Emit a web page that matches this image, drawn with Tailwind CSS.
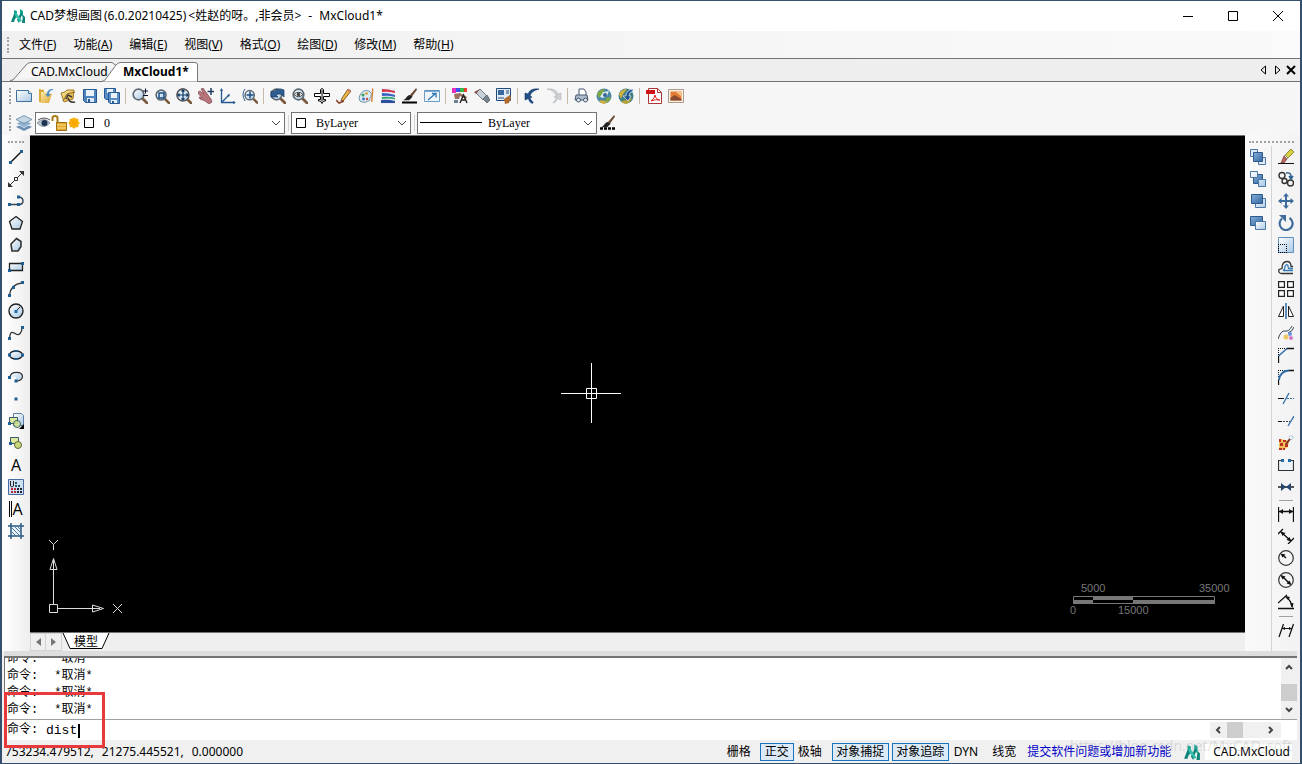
<!DOCTYPE html>
<html lang="zh-CN">
<head>
    <meta charset="UTF-8">
    <meta name="viewport" content="width=device-width, initial-scale=1.0">
    <title>CAD梦想画图 - MxCloud1</title>
    <script src="https://cdn.jsdelivr.net/npm/@tailwindcss/browser@4"></script>
</head>
<body class="h-screen overflow-hidden bg-[#f0f0f0] text-xs text-black font-['Noto_Sans','Noto_Sans_CJK_SC',sans-serif]">
<!-- shared gradients and symbols -->
<svg class="absolute size-0" aria-hidden="true">
    <defs>
        <linearGradient id="sky" x1="0" y1="0" x2="1" y2="1"><stop offset="0" stop-color="#fff"/><stop offset="1" stop-color="#a9c8e4"/></linearGradient>
        <linearGradient id="steel" x1="0" y1="0" x2="1" y2="1"><stop offset="0" stop-color="#86aedb"/><stop offset="1" stop-color="#34679f"/></linearGradient>
        <linearGradient id="gold" x1="0" y1="0" x2="1" y2="1"><stop offset="0" stop-color="#fbe9a4"/><stop offset="1" stop-color="#dca536"/></linearGradient>
    </defs>
    <symbol id="logo" viewBox="0 0 16 16">
        <path d="M4 2l3 1v6l-3 3zM10 1l3 2v6l-3-2z" fill="#12a594"/>
        <path d="M1 14l3-8 2 1-2 7zM7 12l4-8 1 2-3 9zM12 15l1-8 2 2v6z" fill="#0d8378"/>
        <path d="M6 4l6 9-2 1-5-7z" fill="#35c0ad"/>
    </symbol>
    <symbol id="lens" viewBox="0 0 16 16">
        <path d="M10 10l5 5" stroke="#7b5a3e" stroke-width="2.8" stroke-linecap="round"/>
        <circle cx="6.500" cy="6.500" r="5.300" fill="url(#sky)" stroke="#5c6872" stroke-width="1.700"/>
    </symbol>
    <symbol id="brush" viewBox="0 0 16 16">
        <path d="M15 0L8 8l2 2 6-8z" fill="#6b4a35"/>
        <path d="M8 8l3 2-4 4H0c4-1 4-6 8-6z" fill="#222"/>
    </symbol>
</svg>

<div class="flex h-full flex-col border-x-2 border-y border-[#35506c]">

    <!-- title bar -->
    <header class="flex h-[30px] shrink-0 items-center bg-white pl-2">
        <svg class="size-4"><use href="#logo"/></svg>
        <h1 class="ml-1 flex-1 whitespace-nowrap">CAD梦想画图<span class="mx-0.5">(6.0.20210425)</span>&lt;姓赵的呀。,非会员&gt;<span class="mx-1"> - </span>MxCloud1*</h1>
        <div class="flex [&>button]:grid [&>button]:h-7 [&>button]:w-[45px] [&>button]:place-items-center">
            <button aria-label="最小化"><svg width="12" height="12"><path d="M1 6.500h10" stroke="#000"/></svg></button>
            <button aria-label="最大化"><svg width="12" height="12"><path d="M1.500 1.500h9v9h-9z" fill="none" stroke="#000"/></svg></button>
            <button aria-label="关闭"><svg width="12" height="12"><path d="M1 1l10 10M11 1L1 11" stroke="#000"/></svg></button>
        </div>
    </header>

    <!-- menu -->
    <nav class="flex h-[27px] shrink-0 items-center gap-px bg-linear-to-r from-[#f0f0f0] to-[#fafafa] pl-[5px] [&>button]:px-2 [&>button]:whitespace-nowrap">
        <span class="h-4 border-l-2 border-dotted border-neutral-400"></span>
        <button class="ml-px">文件(<u>F</u>)</button>
        <button>功能(<u>A</u>)</button>
        <button>编辑(<u>E</u>)</button>
        <button>视图(<u>V</u>)</button>
        <button>格式(<u>O</u>)</button>
        <button>绘图(<u>D</u>)</button>
        <button>修改(<u>M</u>)</button>
        <button>帮助(<u>H</u>)</button>
    </nav>

    <!-- document tabs -->
    <div class="flex h-6 shrink-0 items-end border-y border-neutral-500 bg-[#eee] pl-2">
        <button class="relative h-[19px] w-[108px] pl-[21px] text-left">
            <svg class="absolute inset-0 overflow-visible" width="108" height="19"><path d="M0 18.500L3 18L16 3Q18 .5 21 .5H102L108 5" fill="#f6f6f6" stroke="#777"/></svg>
            <span class="relative">CAD.MxCloud</span>
        </button>
        <button class="relative -ml-4 h-[19px] w-24 pl-[21px] text-left font-bold">
            <svg class="absolute inset-0 overflow-visible" width="96" height="20"><path d="M0 19.500L3 18L14 3Q16 .5 19 .5H93Q95.500 .5 95.500 3V19.500" fill="#fff" stroke="#777"/></svg>
            <span class="relative">MxCloud1*</span>
        </button>
        <div class="ml-auto flex h-full items-center gap-1 pr-1">
            <button aria-label="上一个"><svg width="10" height="10"><path d="M7.500 1v8L3 5z" fill="none" stroke="#000"/></svg></button>
            <button aria-label="下一个"><svg width="10" height="10"><path d="M3.500 1v8L8 5z" fill="none" stroke="#000"/></svg></button>
            <button aria-label="关闭文档"><svg width="10" height="10"><path d="M1 1l8 8M9 1L1 9" stroke="#000" stroke-width="2"/></svg></button>
        </div>
    </div>

    <!-- standard toolbar -->
    <div class="flex h-7 shrink-0 items-center bg-[#f6f6f6] [&_svg]:size-4 [&>button]:grid [&>button]:size-[22px] [&>button]:shrink-0 [&>button]:place-items-center [&>i]:mx-0.5 [&>i]:h-4 [&>i]:w-0.5 [&>i]:border-l [&>i]:border-[#c8b8a8]">
        <span class="mr-0.5 ml-[7px] h-4 border-l-2 border-dotted border-neutral-400"></span>
        <button aria-label="新建"><svg viewBox="0 0 16 16"><path d="M.5 2.500h12l3 3v8h-15z" fill="url(#sky)" stroke="#40709c"/><path d="M12.500 2.500v3h3" fill="#fff" stroke="#40709c"/></svg></button>
        <button aria-label="打开"><svg viewBox="0 0 16 16"><path d="M1 1l5 1v13l-5-1z" fill="#d9a93a"/><path d="M3 4h4l7 2-3 9H3z" fill="url(#gold)"/><path d="M15 1c-4 0-6 2-6 5H7l3 3 3-3h-2c0-2 1-4 4-4z" fill="#4c8cc2"/></svg></button>
        <button aria-label="打开云图"><svg viewBox="0 0 16 16"><path d="M1 5l4-1 2-2h7l-1 9-9 3z" fill="url(#gold)" stroke="#a47b25"/><path d="M3 13l4-7 8-2" fill="none" stroke="#8a6419"/><path d="M15 14q-6 1-7-4M6 11l2-4 4 2" fill="none" stroke="#3d3a36" stroke-width="1.500"/></svg></button>
        <button aria-label="保存"><svg viewBox="0 0 16 16"><path d="M1.500 1.500h13v13h-11l-2-2z" fill="#4f83bd" stroke="#275a91"/><path d="M4 2h8v6H4z" fill="#e9f2fb"/><path d="M5 10h7v4H5z" fill="#dbe7f3"/><path d="M6 11h2v3H6z" fill="#275a91"/></svg></button>
        <button aria-label="另存为"><svg viewBox="0 0 16 16"><path d="M.5 .5h11v11H2l-1.500-1.500z" fill="#5b8ec5" stroke="#275a91"/><path d="M3 1h6v4H3z" fill="#e9f2fb"/><path d="M4.500 4.500h11v11H6l-1.500-1.500z" fill="#5b8ec5" stroke="#275a91"/><path d="M7 5h6v5H7zM7 12h6v3H7z" fill="#e9f2fb"/><path d="M8 13h2v2H8z" fill="#275a91"/></svg></button>
        <i></i>
        <button aria-label="实时缩放"><svg viewBox="0 0 16 16"><use href="#lens" width="16" height="16"/><path d="M11 3h5M13.500 .5v5M11 7.500h5" stroke="#113"/></svg></button>
        <button aria-label="窗口缩放"><svg viewBox="0 0 16 16"><use href="#lens" x="1" y="1" width="15" height="15"/><path d="M5 5h5v5H5z" fill="none" stroke="#1c4f86" stroke-width="1.500"/></svg></button>
        <button aria-label="范围缩放"><svg viewBox="0 0 16 16"><use href="#lens" width="16" height="16"/><circle cx="7" cy="7" r="6" fill="url(#sky)" stroke="#555" stroke-width="1.400"/><path d="M7 2v10M2 7h10M5.500 3.500L7 2l1.500 1.500M5.500 10.500L7 12l1.500-1.500M3.500 5.500L2 7l1.500 1.500M10.500 5.500L12 7l-1.500 1.500" fill="none" stroke="#123c66" stroke-width="1.200"/></svg></button>
        <button aria-label="平移"><svg viewBox="0 0 16 16"><path d="M0 4l2-1 4 3-3-5 2-1 5 7 3 4 1 3-3 2-4-3-5-2-1-2 3 1-4-5z" fill="#b7727a" stroke="#7d4a52" stroke-width=".7"/><path d="M13 0v7M9.500 3.500h7" stroke="#243a63" stroke-width="1.500"/></svg></button>
        <button aria-label="坐标系"><svg viewBox="0 0 16 16"><path d="M1.500 1v13.500H15M1.500 14.500L9 7" fill="none" stroke="#275a91" stroke-width="1.300"/><path d="M0 3l1.500-3L3 3zM13 13l3 1.500-3 1.500zM7 7l3-1-1 3z" fill="#275a91"/></svg></button>
        <button aria-label="放大"><svg viewBox="0 0 16 16"><use href="#lens" x="2" y="1" width="14" height="15"/><path d="M8 3.500v7M4.500 7h7" stroke="#1c4f86" stroke-width="1.500"/><path d="M3 1Q-1 6 3 13" fill="none" stroke="#275a91"/></svg></button>
        <i></i>
        <button aria-label="上一视图"><svg viewBox="0 0 16 16"><use href="#lens" width="16" height="16"/><path d="M1 9l0-6 2 1q5-5 11-2v7q-3-5-8-2l2 2z" fill="#2f5f92" stroke="#16375c" stroke-width=".7"/></svg></button>
        <button aria-label="动态观察"><svg viewBox="0 0 16 16"><use href="#lens" width="16" height="16"/><path d="M2 6.500Q6.500 2 11 6.500 6.500 11 2 6.500z" fill="#fff" stroke="#444"/><circle cx="6.500" cy="6.500" r="1.800" fill="#444"/></svg></button>
        <button aria-label="重生成"><svg viewBox="0 0 16 16"><path d="M6.500 1.500q1.500-2 3 0v4h6v3h-6v3h2v1.500h-2L8 15.500 6.500 13h-2v-1.500h2v-3h-6v-3h6z" fill="#fff" stroke="#000"/><path d="M8 2v11" stroke="#000"/></svg></button>
        <button aria-label="编辑"><svg viewBox="0 0 16 16"><path d="M12 1l3 2-7 9-3 1 1-3z" fill="#eab63c" stroke="#6b4a20" stroke-width=".8"/><path d="M12 1l3 2-1 1.500-3-2z" fill="#d67b6e"/><path d="M0 12l3 3 5-2" fill="none" stroke="#8b3c24" stroke-width="1.500"/></svg></button>
        <button aria-label="颜色"><svg viewBox="0 0 16 16"><path d="M2 7Q5 1 11 3q4 2 2 6-2 1-1 3-5 4-10 1-2-3 0-6z" fill="#d9eaf2" stroke="#7097a8"/><circle cx="5" cy="7" r="1.500" fill="#3c9b52"/><circle cx="8.500" cy="5.500" r="1.300" fill="#e0912c"/><circle cx="5.500" cy="11" r="1.400" fill="#4472c4"/><circle cx="9" cy="11" r="1.200" fill="#d04444"/><path d="M14 0l1.500 1-1 13h-1.500z" fill="#d68b42"/></svg></button>
        <button aria-label="图层颜色"><svg viewBox="0 0 16 16"><path d="M1 0h14v16H1z" fill="#e9eef4"/><path d="M2 1q6 0 13 2v2Q8 3 2 4z" fill="#d8334a"/><path d="M2 5q7 0 13 2v2Q8 7 2 8z" fill="#3a5fc2"/><path d="M2 9q7-1 13 1v1.500Q8 10 2 11z" fill="#2fa56a"/><path d="M1 12q7-1 14 1v2H1z" fill="#2c4f9e"/></svg></button>
        <button aria-label="线宽"><svg viewBox="0 0 16 16"><use href="#brush" width="16" height="14"/><path d="M0 14.500h15" stroke="#000" stroke-width="2"/></svg></button>
        <button aria-label="全屏"><svg viewBox="0 0 16 16"><path d="M.5 2.500h15v11H.5z" fill="#eef6fc" stroke="#6a9cc4"/><path d="M1 3h14" stroke="#5a91bf" stroke-width="1.500"/><path d="M4 12l7-6M8 5.500h4v4" fill="none" stroke="#3476b3" stroke-width="1.300"/></svg></button>
        <i></i>
        <button aria-label="文字样式"><svg viewBox="0 0 16 16"><path d="M0 0h4v5H0z" fill="#e22dc0"/><path d="M4 0h4v4H4z" fill="#3a54e6"/><path d="M8 0h4v4H8z" fill="#35b449"/><path d="M12 0h3v4h-3z" fill="#e9402f"/><path d="M2 6l6-1 7 4-1 2-6-3-1 3H3z" fill="#9a6f5f"/><path d="M2 12h4v3H2z" fill="#6a7f92"/><path d="M8 15l3.500-8 3.500 8M9.500 12h4" fill="none" stroke="#222" stroke-width="1.400"/></svg></button>
        <button aria-label="橡皮"><svg viewBox="0 0 16 16"><path d="M2 5l4-4 7 7-4 4z" fill="#c6d0d8" stroke="#5b666e" stroke-width=".8"/><path d="M9 11l4-4 3 5-3 3z" fill="#77838c" stroke="#4a545c" stroke-width=".7"/><path d="M0 4l6-3-4 5z" fill="#8a4a48"/></svg></button>
        <button aria-label="打印设置"><svg viewBox="0 0 16 16"><path d="M.5 .5h14v12H.5z" fill="#dfeaf5" stroke="#204a7a"/><path d="M2 2h6v5H2z" fill="#37689e"/><path d="M10 3h3M10 5h3M2 10h6" stroke="#204a7a"/><path d="M8 11l6-4 1 3-2 5-4 1z" fill="#b06c2c"/></svg></button>
        <i></i>
        <button aria-label="撤销"><svg viewBox="0 0 16 16"><path d="M15 1Q6 0 4 6L1 5l0 7 7-3-2-1q1-5 9-7z" fill="#234f86" stroke="#183a66" stroke-width=".6"/><path d="M5 6q-1 6 4 9" fill="none" stroke="#234f86" stroke-width="2.400"/></svg></button>
        <button aria-label="重做"><svg viewBox="0 0 16 16"><path d="M1 1q9-1 11 5l3-1v7L8 9l2-1Q9 3 1 1z" fill="#cfd2d5" stroke="#b4b8bc" stroke-width=".6"/><path d="M11 6q1 6-4 9" fill="none" stroke="#c4c8cc" stroke-width="2"/></svg></button>
        <i></i>
        <button aria-label="打印"><svg viewBox="0 0 16 16"><path d="M5 1h5l2 3v4H5z" fill="#fff" stroke="#48586e"/><path d="M2 7h11l1 5H1z" fill="#aebdd0" stroke="#48586e"/><circle cx="4.500" cy="12" r="2" fill="#dfe6ee" stroke="#48586e"/><circle cx="11.500" cy="12" r="2" fill="#dfe6ee" stroke="#48586e"/></svg></button>
        <button aria-label="网页浏览"><svg viewBox="0 0 16 16"><circle cx="8" cy="8" r="7.500" fill="#4b88a8"/><path d="M1 6q3-5 8-5l-3 5-3 4zM9 15q5-1 6-6l-5 1z" fill="#7fa83e"/><path d="M3 13q4-2 8 1l-3 2q-3 0-5-3z" fill="#cfae3c"/><path d="M4 9l3-5 6-1-2 5-4 2z" fill="#dce9ee"/><circle cx="9" cy="7" r="2" fill="#386892"/></svg></button>
        <button aria-label="发布网页"><svg viewBox="0 0 16 16"><circle cx="8" cy="8" r="7.500" fill="#3f7f86"/><path d="M1 6q3-5 8-5l-4 5-2 5z" fill="#d2b23d"/><path d="M3 13q6 0 11-3-2 5-6 6-3 0-5-3z" fill="#b9a233"/><path d="M15 1q-7 1-7 7H5l5 5 3-5h-2q0-4 4-5z" fill="#1d5293" stroke="#e8eef4" stroke-width=".7"/></svg></button>
        <i></i>
        <button aria-label="输出PDF"><svg viewBox="0 0 16 16"><path d="M2.500 .5h9l4 4v11h-13z" fill="#fff" stroke="#a33"/><path d="M11.500 .5v4h4" fill="none" stroke="#a33"/><path d="M0 2h9v4H0z" fill="#cf1515"/><path d="M5 13q4-3 4-6 1 5 5 5-5-1-9 1z" fill="none" stroke="#d22"/></svg></button>
        <button aria-label="输出图片"><svg viewBox="0 0 16 16"><path d="M.5 1.500h15v13H.5z" fill="#f8f1e8" stroke="#b09a88"/><path d="M2.500 3.500h11v9h-11z" fill="#e57c35"/><path d="M2.500 10l4-3 7 4v1.500h-11z" fill="#8a4a30"/><path d="M8 4h5v4z" fill="#f7c988"/></svg></button>
    </div>

    <!-- layer / colour / linetype bar -->
    <div class="flex h-[25px] shrink-0 items-center bg-[#f6f6f6] font-['Liberation_Serif','Noto_Sans_CJK_SC',serif]">
        <span class="mr-0.5 ml-[7px] h-4 border-l-2 border-dotted border-neutral-400"></span>
        <button aria-label="图层" class="grid size-[22px] place-items-center"><svg class="size-4" viewBox="0 0 16 16"><path d="M0 12l8-4 8 4-8 4z" fill="#6b90b4"/><path d="M0 8.500l8-4 8 4-8 4z" fill="#8fb0cd" stroke="#f6f6f6" stroke-width=".7"/><path d="M0 4.500l8-4 8 4-8 4z" fill="#c5d6e5" stroke="#56789a" stroke-width=".7"/></svg></button>
        <div class="relative">
            <select aria-label="当前图层" class="h-[22px] w-[250px] appearance-none border border-neutral-500 bg-white pl-[68px]"><option>0</option></select>
            <svg class="pointer-events-none absolute top-[3px] left-0.5" width="60" height="16">
                <path d="M0 8q7-7 13 0-6 7-13 0z" fill="#b9c6d2" stroke="#8793a0"/><circle cx="7.500" cy="8" r="3" fill="#1d3550"/><path d="M1 5q6-4 12 0" fill="none" stroke="#555"/>
                <path d="M15.500 6V3q0-2 2.500-2t2.500 2v5" fill="none" stroke="#a87a14" stroke-width="2"/><path d="M19.500 7.500h10v8h-10z" fill="#e2ab30" stroke="#9c6e10"/><path d="M20 10h9M20 13h9" stroke="#f8dc8c"/>
                <circle cx="37" cy="8" r="5" fill="#fdb813"/><path d="M37 2.500v11M31.500 8h11M33 4l8 8M41 4l-8 8" stroke="#f6a800" stroke-width="1.500"/>
                <path d="M47.500 3.500h9v9h-9z" fill="#fff" stroke="#000"/>
            </svg>
            <svg class="pointer-events-none absolute top-2 right-1" width="10" height="7"><path d="M1 1l4 4 4-4" fill="none" stroke="#444"/></svg>
        </div>
        <span class="mx-[3px] -mr-0.5 h-4 border-l border-neutral-300 pr-1"></span>
        <div class="relative">
            <select aria-label="颜色控制" class="h-[22px] w-[120px] appearance-none border border-neutral-500 bg-white pl-6"><option>ByLayer</option></select>
            <svg class="pointer-events-none absolute top-1.5 left-[5px]" width="10" height="10"><path d="M.5 .5h9v9h-9z" fill="#fff" stroke="#000"/></svg>
            <svg class="pointer-events-none absolute top-2 right-1" width="10" height="7"><path d="M1 1l4 4 4-4" fill="none" stroke="#444"/></svg>
        </div>
        <span class="mx-[3px] -mr-0.5 h-4 border-l border-neutral-300 pr-1"></span>
        <div class="relative">
            <select aria-label="线型控制" class="h-[22px] w-[180px] appearance-none border border-neutral-500 bg-white pl-[70px]"><option>ByLayer</option></select>
            <svg class="pointer-events-none absolute top-2.5 left-[3px]" width="62" height="2"><path d="M0 .5h62" stroke="#000"/></svg>
            <svg class="pointer-events-none absolute top-2 right-1" width="10" height="7"><path d="M1 1l4 4 4-4" fill="none" stroke="#444"/></svg>
        </div>
        <button aria-label="匹配" class="grid size-[22px] place-items-center"><svg class="size-4" viewBox="0 0 16 16"><use href="#brush" width="16" height="14"/><path d="M0 13.500h16" stroke="#000" stroke-width="2.500" stroke-dasharray="3 1"/></svg></button>
    </div>

    <!-- work area -->
    <div class="flex min-h-0 flex-1">
        <!-- draw tools -->
        <aside class="flex w-7 shrink-0 flex-col items-center bg-linear-to-r from-white to-[#eee] [&_svg]:size-4 [&>button]:grid [&>button]:size-[22px] [&>button]:shrink-0 [&>button]:place-items-center">
            <span class="mt-1.5 mb-[3px] w-4 border-t-2 border-dotted border-neutral-400"></span>
            <button aria-label="直线"><svg viewBox="0 0 16 16"><path d="M2 14L14 2" stroke="#111" stroke-width="1.400"/><path d="M1 12h3v3H1zM12 1h3v3h-3z" fill="#1d5f96"/></svg></button>
            <button aria-label="构造线"><svg viewBox="0 0 16 16"><path d="M2 14L14 2" stroke="#333"/><path d="M0 16v-5l5 5zM16 0v5l-5-5z" fill="#333"/><path d="M6.500 6.500h3v3h-3z" fill="#fff" stroke="#333"/></svg></button>
            <button aria-label="多段线"><svg viewBox="0 0 16 16"><path d="M2 11.500h9q4 0 4-3.500t-4-4" fill="none" stroke="#345" stroke-width="1.400"/><path d="M0 10h3v3H0zM9 10h3v3H9zM9 2.500h3v3H9z" fill="#1d5f96"/></svg></button>
            <button aria-label="多边形"><svg viewBox="0 0 16 16"><path d="M8 1.500l6.500 5L12 14H4L1.500 6.500z" fill="url(#sky)" stroke="#222" stroke-width="1.300"/></svg></button>
            <button aria-label="不规则多边形"><svg viewBox="0 0 16 16"><path d="M8.500 1.500l4.500 3v5L10 14H4L3 7z" fill="url(#sky)" stroke="#333" stroke-width="1.600"/></svg></button>
            <button aria-label="矩形"><svg viewBox="0 0 16 16"><path d="M1.500 4.500h13v7h-13z" fill="url(#sky)" stroke="#222" stroke-width="1.300"/><path d="M0 10h3v3H0zM13 3h3v3h-3z" fill="#1d5f96"/></svg></button>
            <button aria-label="圆弧"><svg viewBox="0 0 16 16"><path d="M1.500 14Q3 3 14 2" fill="none" stroke="#333" stroke-width="1.300"/><path d="M0 13h3v3H0zM4 5h3v3H4zM13 0h3v3h-3z" fill="#1d5f96"/></svg></button>
            <button aria-label="圆"><svg viewBox="0 0 16 16"><circle cx="8" cy="8" r="7" fill="url(#sky)" stroke="#222" stroke-width="1.400"/><path d="M8 8l4-4" stroke="#222"/><path d="M6.500 7h3v3h-3z" fill="#1d6fb6"/></svg></button>
            <button aria-label="样条曲线"><svg viewBox="0 0 16 16"><path d="M1.500 14C2 5 5 7 8 9s6-1 6-7" fill="none" stroke="#333" stroke-width="1.300"/><path d="M0 12h3v3H0zM13 1h3v3h-3z" fill="#1d5f96"/></svg></button>
            <button aria-label="椭圆"><svg viewBox="0 0 16 16"><ellipse cx="8" cy="8" rx="6.500" ry="4" fill="url(#sky)" stroke="#222" stroke-width="1.300"/><path d="M0 6.500h3v3H0zM13 6.500h3v3h-3zM6.500 3h3v2h-3zM6.500 11h3v2h-3z" fill="#1d5f96"/></svg></button>
            <button aria-label="椭圆弧"><svg viewBox="0 0 16 16"><path d="M2 8c1-6 12-6 12.500-.5Q14 12 8 12V8z" fill="url(#sky)"/><path d="M2 8c1-6 12-6 12.500-.5Q14 12 8 12" fill="none" stroke="#333" stroke-width="1.300"/><path d="M0 7h3v3H0zM6.500 10.500h3v3h-3z" fill="#1d5f96"/></svg></button>
            <button aria-label="点"><svg viewBox="0 0 16 16"><path d="M6.500 6.500h3v3h-3z" fill="#1d5f96"/></svg></button>
            <button aria-label="插入块"><svg viewBox="0 0 16 16"><path d="M5.500 .5h8l2 2v10h-10z" fill="url(#sky)" stroke="#5b7fa0"/><path d="M1.500 4.500h8v6h-8z" fill="#dfea98" stroke="#375a6c"/><circle cx="9" cy="11" r="3.500" fill="#d9e88e" fill-opacity=".8" stroke="#375a6c"/><path d="M0 9h3v3H0z" fill="#1d5f96"/><path d="M16 11v5h-5z" fill="#000"/></svg></button>
            <button aria-label="创建块"><svg viewBox="0 0 16 16"><path d="M2.500 2.500h8v6h-8z" fill="#dfea98" stroke="#375a6c"/><circle cx="10" cy="10" r="3.500" fill="#cbd77e" stroke="#5b6b3c"/><path d="M1 7h3v3H1z" fill="#1d5f96"/></svg></button>
            <button aria-label="单行文字" class="text-base leading-4 font-medium font-['Open_Sans',sans-serif]">A</button>
            <button aria-label="图案"><svg viewBox="0 0 16 16"><path d="M.5 .5h15v15H.5z" fill="#cfdff2" stroke="#486ba5"/><path d="M2.500 2v5q1.500 2 3 0V2" fill="none" stroke="#222"/><path d="M7 3h2v2H7zM7 6h2v2H7zM10 6h2v2h-2z" fill="#256"/><path d="M3 9h2v2H3zM6 9h2v2H6zM3 12h2v2H3zM6 12h2v2H6z" fill="#b5293a"/><path d="M9 9h2v2H9zM12 9h2v2h-2zM9 12h2v2H9zM12 12h2v2h-2z" fill="#223"/></svg></button>
            <button aria-label="多行文字" class="text-base leading-4 font-medium font-['Open_Sans',sans-serif]"><span class="border-l-3 border-double border-black">A</span></button>
            <button aria-label="图案填充"><svg viewBox="0 0 16 16"><path d="M4 4h8v8H4z" fill="#e8f2fa"/><path d="M0 3h16M0 13h16M3 0v16M13 0v16" stroke="#2a5a84" stroke-width="1.500"/><path d="M3 4l9 9M6 3l7 7M3 8l5 5M9 3l4 4" stroke="#4b7ba3"/></svg></button>
        </aside>

        <!-- drawing -->
        <main class="flex min-w-0 flex-1 flex-col">
            <div class="relative flex-1 border-t border-b border-neutral-500 bg-black">
                <svg class="absolute top-[227px] left-[531px]" width="60" height="60" fill="none" stroke="#fff"><path d="M0 30.500h60M30.500 0v60M25.500 25.500h10v10h-10z"/></svg>
                <svg class="absolute bottom-[18px] left-[18px]" width="76" height="76" fill="none" stroke="#ddd">
                    <path d="M1.500 66.500h8v8h-8zM5.500 66V22M9 70.500h36M2 31.500h7L5.500 20.500zM44.500 67v7l11-3.500zM44 70.500h8M1 2l4.500 4.500L10 2M5.500 6.500V12M65 66l9 9M74 66l-9 9"/>
                </svg>
                <svg class="absolute right-3.5 bottom-3 overflow-visible font-['Liberation_Sans',sans-serif] text-[11px]" width="160" height="40" fill="#777">
                    <text x="10" y="12">5000</text><text x="128" y="12">35000</text><text x="-1" y="34">0</text><text x="47" y="34">15000</text>
                    <path d="M2.500 16.500h141v7h-141z" fill="none" stroke="#777"/><path d="M2 20h20v4H2zM22 16h40v4H22zM62 20h82v4H62z"/>
                </svg>
            </div>
            <div class="flex h-[18px] shrink-0 bg-[#efefef]">
                <button aria-label="向左" class="grid w-4 place-items-center border border-neutral-300"><svg width="6" height="8"><path d="M6 0v8L1 4z" fill="#777"/></svg></button>
                <button aria-label="向右" class="grid w-4 place-items-center border border-l-0 border-neutral-300"><svg width="6" height="8"><path d="M0 0v8l5-4z" fill="#777"/></svg></button>
                <button class="relative w-12">
                    <svg class="absolute inset-0" width="48" height="18"><path d="M1 0l7 15.500h32L47 0" fill="#fff" stroke="#000"/></svg>
                    <span class="relative">模型</span>
                </button>
            </div>
        </main>

        <!-- draw order and modify tools -->
        <aside class="relative flex w-[55px] shrink-0 bg-linear-to-r from-[#fafafa] to-[#f2f2f2] pt-[11px] [&_button]:grid [&_button]:size-[22px] [&_button]:shrink-0 [&_button]:place-items-center [&_svg]:size-4">
            <span class="absolute top-1.5 right-1.5 left-1 border-t-2 border-dotted border-neutral-400"></span>
            <div class="flex w-[26px] flex-col items-center">
                <button aria-label="前置"><svg viewBox="0 0 16 16"><path d="M.5 .5h7v7h-7z" fill="#dfeaf5" stroke="#4c78a5"/><path d="M8.500 8.500h7v7h-7z" fill="#dfeaf5" stroke="#4c78a5"/><path d="M3.500 3.500h9v9h-9z" fill="url(#steel)" stroke="#2c5a8c"/></svg></button>
                <button aria-label="后置"><svg viewBox="0 0 16 16"><path d="M3.500 3.500h9v9h-9z" fill="url(#steel)" stroke="#2c5a8c"/><path d="M.5 .5h7v6h-7zM8.500 8.500h7v7h-7z" fill="url(#sky)" stroke="#4c78a5"/></svg></button>
                <button aria-label="置于对象之上"><svg viewBox="0 0 16 16"><path d="M5.500 5.500h10v9h-10z" fill="url(#sky)" stroke="#4c78a5"/><path d="M1.500 1.500h11v9h-11z" fill="url(#steel)" stroke="#2c5a8c"/></svg></button>
                <button aria-label="置于对象之下"><svg viewBox="0 0 16 16"><path d="M.5 1.500h12v9H.5z" fill="url(#steel)" stroke="#2c5a8c"/><path d="M5.500 6.500h10v8h-10z" fill="url(#sky)" stroke="#4c78a5"/></svg></button>
            </div>
            <div class="flex flex-1 flex-col items-center border-l border-neutral-300">
                <button aria-label="删除"><svg viewBox="0 0 16 16"><path d="M13 0l3 3-6 6-3-3z" fill="#d9cf3f" stroke="#6f6a20" stroke-width=".7"/><path d="M7 6l3 3-1 1-3-3z" fill="#fff" stroke="#555" stroke-width=".5"/><path d="M6 7l3 3-3 4H3z" fill="#b8685a" stroke="#7c3a30" stroke-width=".7"/><path d="M0 14.500h16" stroke="#111"/></svg></button>
                <button aria-label="复制"><svg viewBox="0 0 16 16" fill="none" stroke="#333" stroke-width="1.400"><circle cx="4" cy="4.500" r="3"/><circle cx="6.500" cy="10" r="2.500"/><circle cx="12.500" cy="12" r="3"/><path d="M8 2q6-1 5 5M11 5l2 3 2-3" stroke="#245b8e"/></svg></button>
                <button aria-label="移动"><svg viewBox="0 0 16 16"><path d="M8 0l3 3.500H9V7h3.500V5L16 8l-3.500 3V9H9v3.500h2L8 16l-3-3.500h2V9H3.500v2L0 8l3.500-3v2H7V3.500H5z" fill="#3d6c9c"/></svg></button>
                <button aria-label="旋转"><svg viewBox="0 0 16 16"><path d="M4 3.500A6.500 6.500 0 1 0 11.500 3" fill="none" stroke="#3d6c9c" stroke-width="2.200"/><path d="M1 0h7v7z" fill="#3d6c9c"/></svg></button>
                <button aria-label="缩放"><svg viewBox="0 0 16 16"><path d="M.5 .5h15v15H.5z" fill="url(#sky)" stroke="#5e8fbd"/><path d="M0 7.500h8.500V16M.5 7v9M0 15.500h9" fill="none" stroke="#000" stroke-dasharray="1 1"/></svg></button>
                <button aria-label="偏移"><svg viewBox="0 0 16 16" fill="none"><path d="M15 14.500H3q-3-1-2-4l3-1q0-7 5-7 4 0 4 5h2" stroke="#333" stroke-width="1.300"/><path d="M15 11.500H5q2-1 2-4 1-3 3-1 0 3 1 3h4" stroke="#2e78b8" stroke-width="1.300"/></svg></button>
                <button aria-label="阵列"><svg viewBox="0 0 16 16" fill="#fff" stroke="#222" stroke-width="1.200"><path d="M.6 .6h5.800v5.800H.6zM9.600 .6h5.800v5.800H9.600zM.6 9.600h5.800v5.800H.6zM9.600 9.600h5.800v5.800H9.600z"/></svg></button>
                <button aria-label="镜像"><svg viewBox="0 0 16 16"><path d="M5.500 3v10.500h-5zM10.500 3v10.500h5z" fill="#fff" stroke="#222"/><path d="M8 0v16" stroke="#2e6ca8" stroke-width="1.500"/></svg></button>
                <button aria-label="编辑样条"><svg viewBox="0 0 16 16"><path d="M0 14Q3 5 7 6t7-5" fill="none" stroke="#345"/><path d="M10 8q5-2 6-6" fill="none" stroke="#345"/><circle cx="8" cy="12" r="2.500" fill="#efc864"/><circle cx="12" cy="9" r="2" fill="#6a8fe0"/><circle cx="13" cy="13" r="2" fill="#d279c6"/></svg></button>
                <button aria-label="倒角"><svg viewBox="0 0 16 16" fill="none"><path d="M0 1.500h9M.5 1v8" stroke="#111" stroke-dasharray="1 1"/><path d="M9 1.500h7M.5 9v7" stroke="#111" stroke-width="1.300"/><path d="M.5 9L9 1.500" stroke="#2e6ca8" stroke-width="1.500"/></svg></button>
                <button aria-label="圆角"><svg viewBox="0 0 16 16" fill="none"><path d="M0 1.500h9M.5 1v8" stroke="#111" stroke-dasharray="1 1"/><path d="M11 1.500h5M.5 11v5" stroke="#111" stroke-width="1.300"/><path d="M1 11Q2 2 11 1.500" stroke="#2e6ca8" stroke-width="2"/></svg></button>
                <button aria-label="修剪"><svg viewBox="0 0 16 16"><path d="M0 7.500h6" stroke="#111"/><path d="M9 7.500h7" stroke="#2e6ca8" stroke-dasharray="2 1"/><path d="M5 13l6-11" stroke="#2e6ca8" stroke-width="1.300"/></svg></button>
                <button aria-label="延伸"><svg viewBox="0 0 16 16"><path d="M0 8.500h4" stroke="#111"/><path d="M5 8.500h7" stroke="#345" stroke-dasharray="2 1"/><path d="M10 13l6-10" stroke="#2e6ca8" stroke-width="1.300"/></svg></button>
                <button aria-label="分解"><svg viewBox="0 0 16 16"><path d="M1 5l3-1 2 1 3 0 2 3-2 5-4 2-4-1z" fill="#f3c15b"/><path d="M1 4h2v3H1zM5 5h3v2H5zM2 8h3v3H2zM7 9h3v3H7zM1 13h3v2H1zM5 13h2v2H5z" fill="#b93222"/><path d="M8 9l4-5" stroke="#7b2c1c" stroke-width="2"/><circle cx="13" cy="2.500" r="2" fill="none" stroke="#7aa6d0" stroke-dasharray="1 1"/></svg></button>
                <button aria-label="打断"><svg viewBox="0 0 16 16"><path d="M4 3.500H.5v10h15v-10H12" fill="#eef3f8" stroke="#333" stroke-width="1.200"/><path d="M3 2h3v3H3zM10 2h3v3h-3z" fill="#2668a5"/></svg></button>
                <button aria-label="合并"><svg viewBox="0 0 16 16"><path d="M0 8h16" stroke="#222" stroke-width="1.500"/><path d="M3 4l5 4-5 4zM13 4L8 8l5 4z" fill="#26486e"/></svg></button>
                <span class="mt-0.5 mb-0.5 w-3.5 border-t border-neutral-400"></span>
                <button aria-label="线性标注"><svg viewBox="0 0 16 16"><path d="M.5 1v15M15.500 1v15M1 5.500h14" stroke="#111" stroke-width="1.300"/><path d="M1 5.500l4-2.500v5zM15 5.500L11 3v5z" fill="#111"/></svg></button>
                <button aria-label="对齐标注"><svg viewBox="0 0 16 16"><path d="M3 4l10 9M0 6l5-5M10 16l6-6" stroke="#111" stroke-width="1.300"/><path d="M2.500 3.500l5 1.500-3 3zM13.500 13.500L8.500 12l3-3z" fill="#111"/></svg></button>
                <button aria-label="半径标注"><svg viewBox="0 0 16 16"><circle cx="8" cy="8" r="7.300" fill="none" stroke="#333" stroke-width="1.200"/><path d="M8 8L4 4.500" stroke="#111" stroke-width="1.500"/><path d="M2.500 3.500l5 1-3 3z" fill="#111"/></svg></button>
                <button aria-label="直径标注"><svg viewBox="0 0 16 16"><circle cx="8" cy="8" r="7.300" fill="none" stroke="#333" stroke-width="1.200"/><path d="M4 4l8 8" stroke="#111" stroke-width="1.500"/><path d="M2.500 3l5 1.500-3 3zM13.500 13l-5-1.500 3-3z" fill="#111"/></svg></button>
                <button aria-label="角度标注"><svg viewBox="0 0 16 16"><path d="M0 14.500h16M0 9l9-8M8 3q5 3 6 10" fill="none" stroke="#111" stroke-width="1.300"/><path d="M7 2l5 1-2 3zM14.500 14L12 9.500l3.500-.5z" fill="#111"/></svg></button>
                <span class="mt-[3px] mb-0.5 w-3.5 border-t border-neutral-400"></span>
                <button aria-label="倾斜标注"><svg viewBox="0 0 16 16"><path d="M1 15L5.500 2M11 15l4.500-13M4 6.500h10" stroke="#111" stroke-width="1.200"/><path d="M4 6.500L7 5v3zM14 6.500L11 5v3z" fill="#111"/></svg></button>
            </div>
        </aside>
    </div>

    <!-- command window -->
    <section class="relative mr-[3px] ml-0.5 shrink-0 border-t-5 border-[#dedede]">
        <div class="flex h-[63px] border-t-2 border-neutral-500 bg-white">
            <div class="flex flex-1 flex-col justify-end overflow-hidden border-l border-neutral-500 pl-0.5 leading-[17px] font-['Liberation_Mono','Noto_Sans_CJK_SC',monospace] [&>p]:flex [&>p]:shrink-0 [&>p]:gap-4">
                <p><span>命令:</span><span>*取消*</span></p>
                <p><span>命令:</span><span>*取消*</span></p>
                <p><span>命令:</span><span>*取消*</span></p>
                <p><span>命令:</span><span>*取消*</span></p>
            </div>
            <div class="flex w-4 flex-col items-center bg-[#f0f0f0] py-1.5">
                <svg width="8" height="6"><path d="M1 5l3-3 3 3" fill="none" stroke="#444" stroke-width="2"/></svg>
                <span class="mt-auto mb-1.5 h-[17px] w-full bg-[#cdcdcd]"></span>
                <svg width="8" height="6"><path d="M1 1l3 3 3-3" fill="none" stroke="#444" stroke-width="2"/></svg>
            </div>
        </div>
        <div class="flex h-[21px] items-center border-t border-neutral-400 bg-white">
            <label for="cmd" class="w-[42px] border-l border-neutral-500 pl-0.5 leading-[17px] font-['Liberation_Mono','Noto_Sans_CJK_SC',monospace]">命令:</label>
            <div class="relative flex-1">
                <input id="cmd" type="text" value="dist" class="block w-full text-[13px] leading-[17px] outline-none font-['Liberation_Mono',monospace]">
                <span class="absolute top-0.5 left-8 h-3.5 w-0.5 bg-black"></span>
            </div>
            <div class="mr-4 flex h-4 w-[71px] items-center bg-[#f0f0f0] px-1">
                <svg width="8" height="8"><path d="M6 1L3 4l3 3" fill="none" stroke="#444" stroke-width="2"/></svg>
                <span class="ml-[5px] h-4 w-4 bg-[#cdcdcd]"></span>
                <svg class="ml-auto" width="10" height="8"><path d="M2 1l3 3-3 3" fill="none" stroke="#444" stroke-width="2"/></svg>
            </div>
        </div>
        <div class="pointer-events-none absolute top-9 left-0 z-10 h-14 w-[101px] border-3 border-[#e8393d]"></div>
    </section>

    <!-- status bar -->
    <footer class="relative flex h-[23px] shrink-0 items-center whitespace-nowrap bg-[#f0f0f0] pt-px pr-2 pl-[3px]">
        <div class="flex gap-2"><span>753234.479512,</span><span>21275.445521,</span><span>0.000000</span></div>
        <div class="ml-auto flex items-center [&>button]:h-[18px] [&>button]:border">
            <button class="mr-2 border-transparent">栅格</button>
            <button class="w-[34px] border-[#1874bd] bg-[#dbeaf6]">正交</button>
            <button class="mx-[3px] border-transparent">极轴</button>
            <button class="mr-[3px] ml-1.5 w-[57px] border-[#1874bd] bg-[#dbeaf6]">对象捕捉</button>
            <button class="w-[57px] border-[#1874bd] bg-[#dbeaf6]">对象追踪</button>
            <button class="mr-1.5 ml-1 border-transparent">DYN</button>
            <button class="mr-2.5 ml-1.5 border-transparent">线宽</button>
            <a href="#" class="mr-3 text-[#0000c8]">提交软件问题或增加新功能</a>
            <svg class="size-[18px]"><use href="#logo"/></svg>
            <span class="ml-1 bg-white pr-0.5 pl-2">CAD.MxCloud</span>
        </div>
        <span class="pointer-events-none absolute -top-1 right-2 text-sm text-neutral-400/30">https://blog.csdn.net/MxCAD_soft</span>
    </footer>
</div>
</body>
</html>
